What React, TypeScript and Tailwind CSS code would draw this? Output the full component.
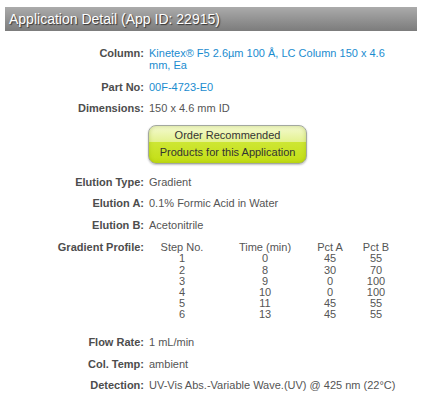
import React from 'react';

const steps = [
  ['1', '0', '45', '55'],
  ['2', '8', '30', '70'],
  ['3', '9', '0', '100'],
  ['4', '10', '0', '100'],
  ['5', '11', '45', '55'],
  ['6', '13', '45', '55'],
];

const Row: React.FC<{ label: string; children: React.ReactNode; className?: string }> = ({ label, children, className }) => (
  <div className={`flex py-[4.75px] leading-[12px] ${className ?? ''}`}>
    <div className="w-[139px] shrink-0 text-right font-bold text-[#4d4d4d]">{label}</div>
    <div className="ml-[5px] text-[#555]">{children}</div>
  </div>
);

const App: React.FC = () => {
  return (
    <div className="w-[422px] h-[408px] bg-white px-[5px] pt-[7px] text-[11px]" style={{ fontFamily: '"Liberation Sans", Arial, sans-serif' }}>
      <div className="h-[24px] bg-gradient-to-b from-[#ababab] to-[#7c7c7c] pl-[4px] flex items-center text-[14px] text-white [text-shadow:1px_1px_1px_#333]">
        Application Detail (App ID: 22915)
      </div>

      <div className="mt-[11.25px]">
        <Row label="Column:">
          <span className="text-[#1a8ccf] block w-[250px]">Kinetex® F5 2.6µm 100 Å, LC Column 150 x 4.6 mm, Ea</span>
        </Row>
        <Row label="Part No:">
          <span className="text-[#1a8ccf]">00F-4723-E0</span>
        </Row>
        <Row label="Dimensions:">150 x 4.6 mm ID</Row>

        <div className="flex mt-[6.5px] mb-[6.5px]">
          <div className="w-[139px] shrink-0" />
          <div className="ml-[4px] w-[159px] h-[39px] rounded-[8px] border border-[#a3a8a0] shadow-[0_1px_2px_rgba(0,0,0,0.25),inset_0_0_4px_rgba(120,150,0,0.35)] bg-[linear-gradient(to_bottom,#f4fad0_0%,#e4f290_42%,#cde634_44%,#c4df14_100%)] flex flex-col items-center justify-start pt-[1px] text-[11px] leading-[17px] text-[#333]">
            <span>Order Recommended</span>
            <span>Products for this Application</span>
          </div>
        </div>

        <Row label="Elution Type:">Gradient</Row>
        <Row label="Elution A:">0.1% Formic Acid in Water</Row>
        <Row label="Elution B:">Acetonitrile</Row>

        <div className="flex pt-[7px] pb-[11px] leading-[11.2px]">
          <div className="w-[139px] shrink-0 text-right font-bold text-[#4d4d4d] whitespace-nowrap">Gradient Profile:</div>
          <div className="ml-[5px] text-[#555]">
            <div className="grid grid-cols-[66px_100px_30px_62px] text-center">
              <div>Step No.</div>
              <div>Time (min)</div>
              <div>Pct A</div>
              <div>Pct B</div>
              {steps.map((s) => (
                <React.Fragment key={s[0]}>
                  <div>{s[0]}</div>
                  <div>{s[1]}</div>
                  <div>{s[2]}</div>
                  <div>{s[3]}</div>
                </React.Fragment>
              ))}
            </div>
          </div>
        </div>

        <Row label="Flow Rate:">1 mL/min</Row>
        <Row label="Col. Temp:">ambient</Row>
        <Row label="Detection:">UV-Vis Abs.-Variable Wave.(UV) @ 425 nm (22°C)</Row>
      </div>
    </div>
  );
};

export default App;
